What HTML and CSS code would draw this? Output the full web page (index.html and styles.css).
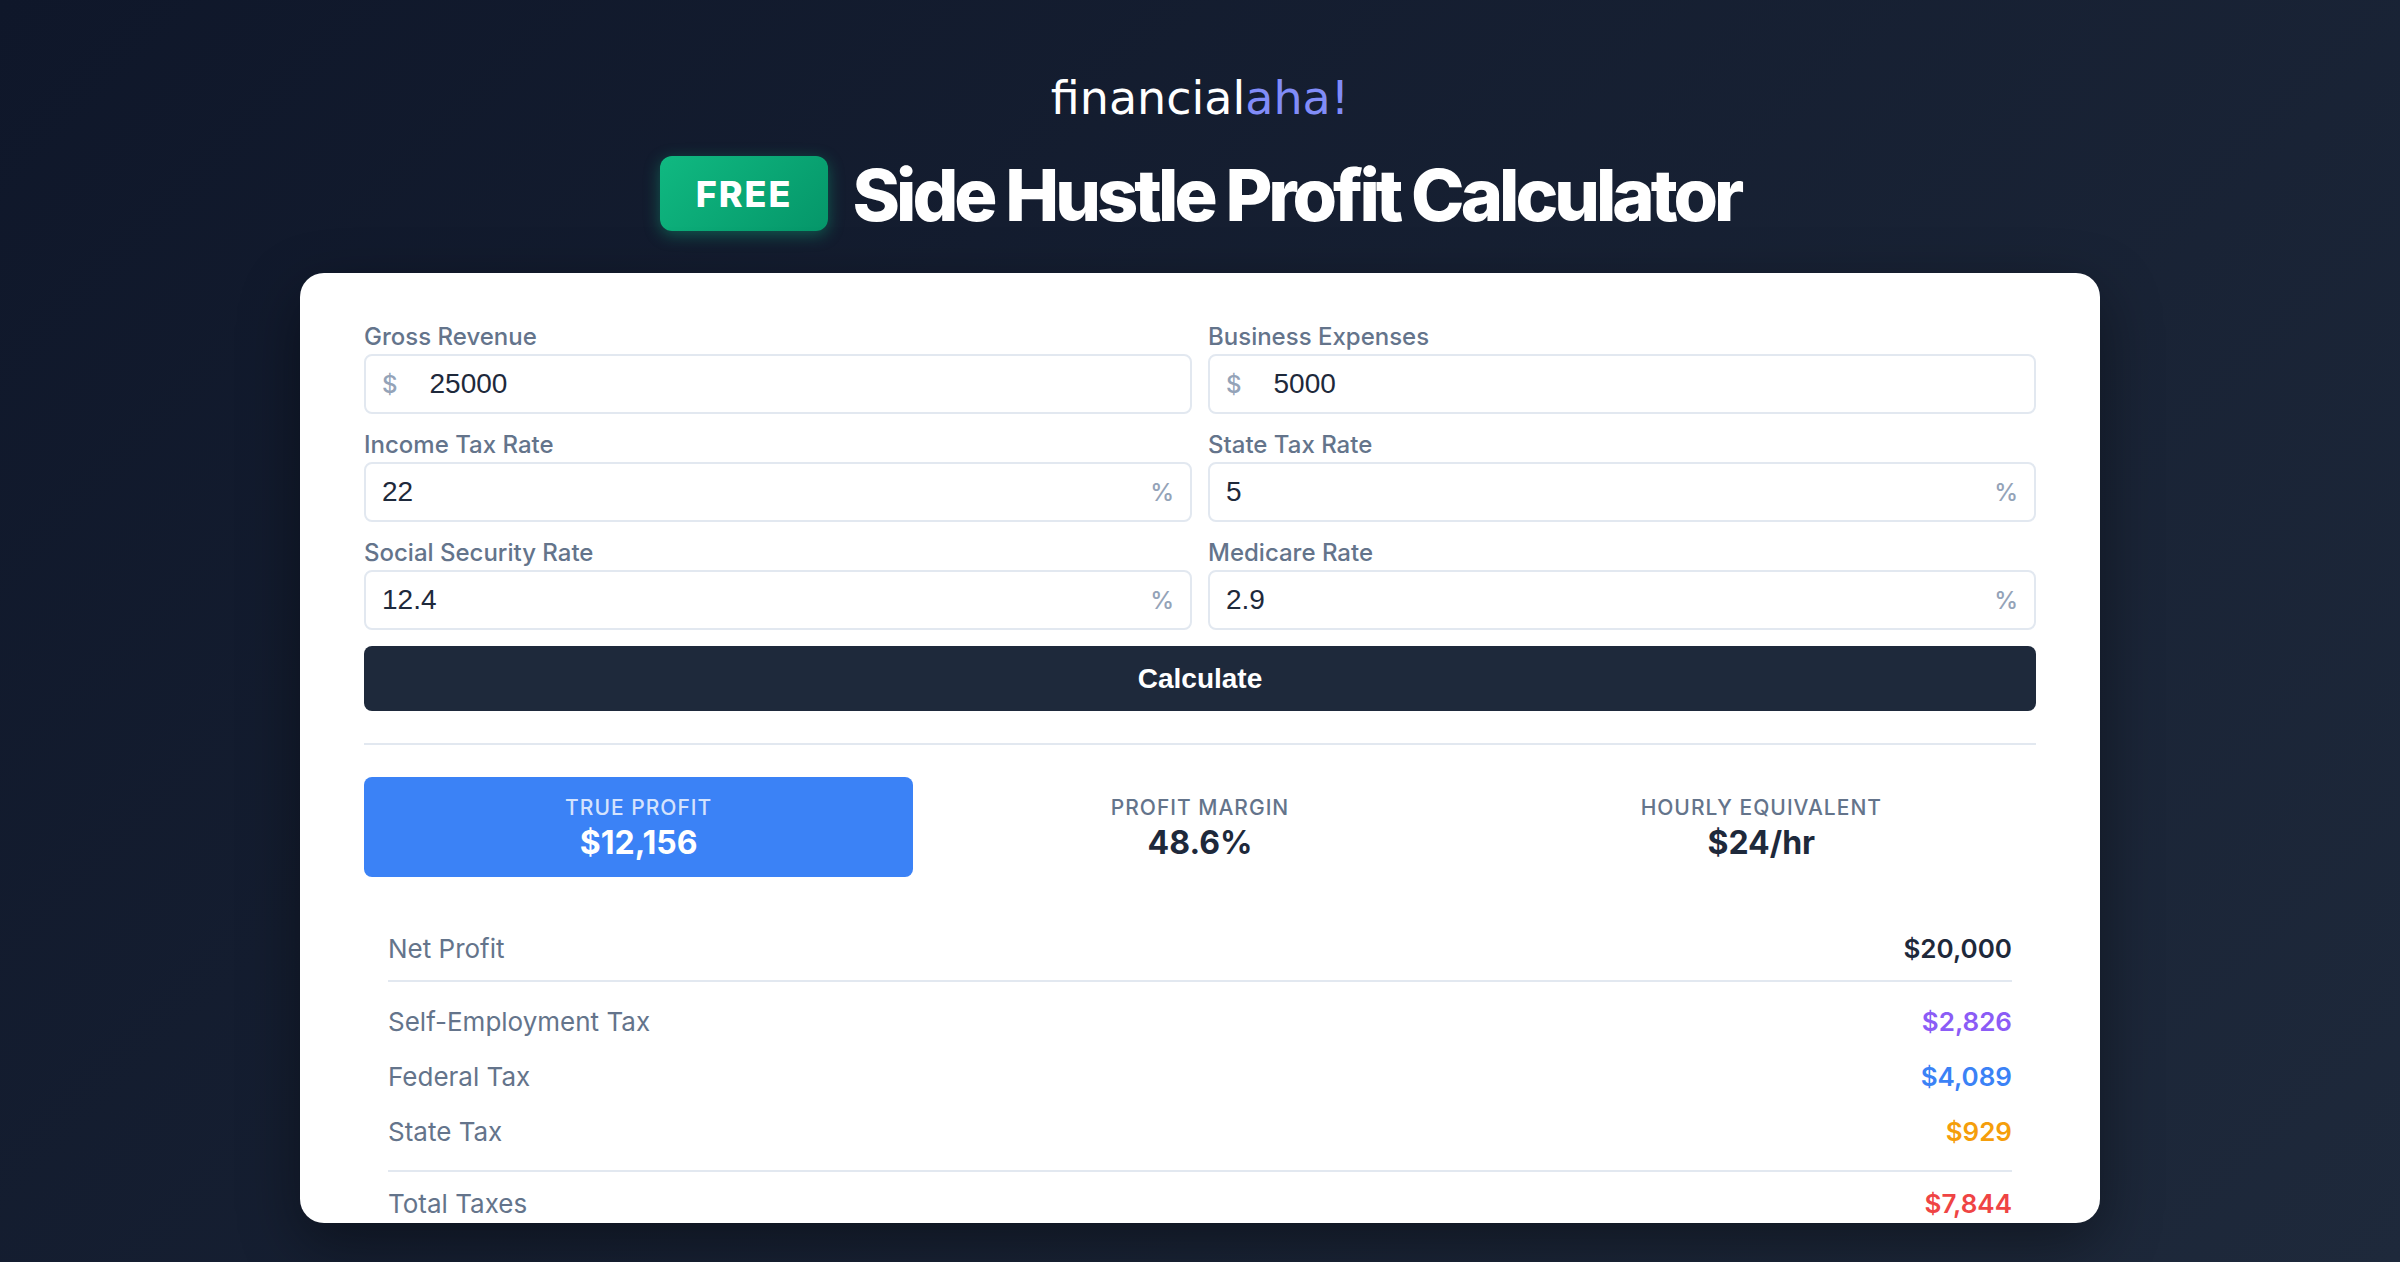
FILE: index.html
```html
<!DOCTYPE html>
<html lang="en">
<head>
  <meta charset="utf-8">
  <meta name="viewport" content="width=device-width, initial-scale=1">
  <title>Side Hustle Profit Calculator</title>
  <link rel="stylesheet" href="styles.css">
</head>
<body>
  <header class="header">
    <p class="logo">financial<span class="logo-accent">aha!</span></p>
    <div class="headline">
      <span class="badge">FREE</span>
      <h1 class="title">Side Hustle Profit Calculator</h1>
    </div>
  </header>

  <main class="card">
    <form class="form">
      <div class="field">
        <label class="label" for="revenue">Gross Revenue</label>
        <div class="control">
          <span class="unit">$</span>
          <input class="input input-prefixed" id="revenue" type="text" inputmode="decimal" value="25000">
        </div>
      </div>
      <div class="field">
        <label class="label" for="expenses">Business Expenses</label>
        <div class="control">
          <span class="unit">$</span>
          <input class="input input-prefixed" id="expenses" type="text" inputmode="decimal" value="5000">
        </div>
      </div>
      <div class="field">
        <label class="label" for="income-tax">Income Tax Rate</label>
        <div class="control">
          <input class="input" id="income-tax" type="text" inputmode="decimal" value="22">
          <span class="unit">%</span>
        </div>
      </div>
      <div class="field">
        <label class="label" for="state-tax">State Tax Rate</label>
        <div class="control">
          <input class="input" id="state-tax" type="text" inputmode="decimal" value="5">
          <span class="unit">%</span>
        </div>
      </div>
      <div class="field">
        <label class="label" for="social-security">Social Security Rate</label>
        <div class="control">
          <input class="input" id="social-security" type="text" inputmode="decimal" value="12.4">
          <span class="unit">%</span>
        </div>
      </div>
      <div class="field">
        <label class="label" for="medicare">Medicare Rate</label>
        <div class="control">
          <input class="input" id="medicare" type="text" inputmode="decimal" value="2.9">
          <span class="unit">%</span>
        </div>
      </div>
      <button class="submit" type="button">Calculate</button>
    </form>

    <section class="results">
      <dl class="stats">
        <div class="stat stat-primary">
          <dt class="stat-label">True Profit</dt>
          <dd class="stat-value">$12,156</dd>
        </div>
        <div class="stat">
          <dt class="stat-label">Profit Margin</dt>
          <dd class="stat-value">48.6%</dd>
        </div>
        <div class="stat">
          <dt class="stat-label">Hourly Equivalent</dt>
          <dd class="stat-value">$24/hr</dd>
        </div>
      </dl>

      <dl class="breakdown">
        <div class="row row-net">
          <dt>Net Profit</dt>
          <dd class="amount">$20,000</dd>
        </div>
        <div class="row">
          <dt>Self-Employment Tax</dt>
          <dd class="amount amount-self">$2,826</dd>
        </div>
        <div class="row">
          <dt>Federal Tax</dt>
          <dd class="amount amount-federal">$4,089</dd>
        </div>
        <div class="row">
          <dt>State Tax</dt>
          <dd class="amount amount-state">$929</dd>
        </div>
        <div class="row row-total">
          <dt>Total Taxes</dt>
          <dd class="amount amount-total">$7,844</dd>
        </div>
      </dl>
    </section>
  </main>
</body>
</html>
```
FILE: styles.css
```css
* {
  box-sizing: border-box;
}

body {
  margin: 0;
  height: 100vh;
  padding: 66px 40px 39px;
  display: flex;
  flex-direction: column;
  align-items: center;
  overflow: hidden;
  font-family: Inter, "Liberation Sans", sans-serif;
  color: #1e293b;
  background: linear-gradient(135deg, #0f172a 0%, #1e293b 100%);
}

p, h1, dl, dd {
  margin: 0;
}

.header {
  display: flex;
  flex-direction: column;
  align-items: center;
  gap: 26px;
  margin-bottom: 42px;
  color: #fff;
}

.logo {
  font-family: "DejaVu Sans", sans-serif;
  font-size: 46px;
  line-height: 64px;
  font-weight: 400;
}

.logo-accent {
  color: #818cf8;
}

.headline {
  display: flex;
  align-items: center;
  gap: 24px;
}

.badge {
  padding: 17px 36px 15px;
  border-radius: 12px;
  font-size: 36px;
  line-height: 43px;
  font-weight: 800;
  letter-spacing: 2px;
  background: linear-gradient(135deg, #10b981 0%, #059669 100%);
  box-shadow: 0 4px 16px rgba(16, 185, 129, 0.4);
}

.title {
  padding-top: 2px;
  font-size: 72px;
  line-height: 73px;
  font-weight: 800;
  letter-spacing: -4px;
}

.card {
  flex: 1;
  min-height: 0;
  width: 100%;
  max-width: 1800px;
  padding: 49px 64px 0;
  overflow: hidden;
  border-radius: 24px;
  background: #fff;
  box-shadow: 0 20px 60px rgba(0, 0, 0, 0.4);
}

.form {
  display: grid;
  grid-template-columns: 1fr 1fr;
  gap: 16px;
}

.label {
  display: block;
  font-size: 24px;
  line-height: 30px;
  padding-bottom: 2px;
  font-weight: 500;
  color: #64748b;
}

.control {
  display: flex;
  align-items: center;
  height: 60px;
  padding: 0 16px;
  border: 2px solid #e2e8f0;
  border-radius: 8px;
}

.unit {
  font-size: 24px;
  font-weight: 500;
  color: #94a3b8;
}

.input {
  flex: 1;
  min-width: 0;
  padding: 0;
  border: 0;
  outline: 0;
  background: none;
  font-family: "Liberation Sans", Arial, sans-serif;
  font-size: 28px;
  line-height: 32px;
  color: #1e293b;
}

.input-prefixed {
  padding-left: 32px;
}

.submit {
  grid-column: 1 / -1;
  height: 65px;
  border: 0;
  border-radius: 8px;
  font-family: "Liberation Sans", Arial, sans-serif;
  font-size: 28px;
  font-weight: 700;
  color: #fff;
  background: #1e293b;
}

.results {
  margin-top: 32px;
  padding-top: 32px;
  border-top: 2px solid #e2e8f0;
}

.stats {
  display: grid;
  grid-template-columns: repeat(3, 1fr);
  gap: 12px;
}

.stat {
  padding: 17px 16px 13px;
  border-radius: 8px;
  text-align: center;
}

.stat-label {
  font-size: 21px;
  line-height: 28px;
  font-weight: 500;
  letter-spacing: 1px;
  text-transform: uppercase;
  color: #64748b;
}

.stat-value {
  font-size: 32px;
  line-height: 42px;
  font-weight: 700;
}

.stat-primary {
  color: #fff;
  background: #3b82f6;
}

.stat-primary .stat-label {
  color: rgba(255, 255, 255, 0.8);
}

.breakdown {
  padding: 44px 24px 0;
}

.row {
  display: flex;
  justify-content: space-between;
  font-size: 26px;
  line-height: 55px;
  color: #64748b;
}

.row-net {
  margin-bottom: 12px;
  padding-bottom: 4px;
  border-bottom: 2px solid #e2e8f0;
}

.row-total {
  margin-top: 11px;
  padding-top: 4px;
  border-top: 2px solid #e2e8f0;
}

.amount {
  font-weight: 600;
  color: #1e293b;
}

.amount-self {
  color: #8b5cf6;
}

.amount-federal {
  color: #3b82f6;
}

.amount-state {
  color: #f59e0b;
}

.amount-total {
  color: #ef4444;
}
```
